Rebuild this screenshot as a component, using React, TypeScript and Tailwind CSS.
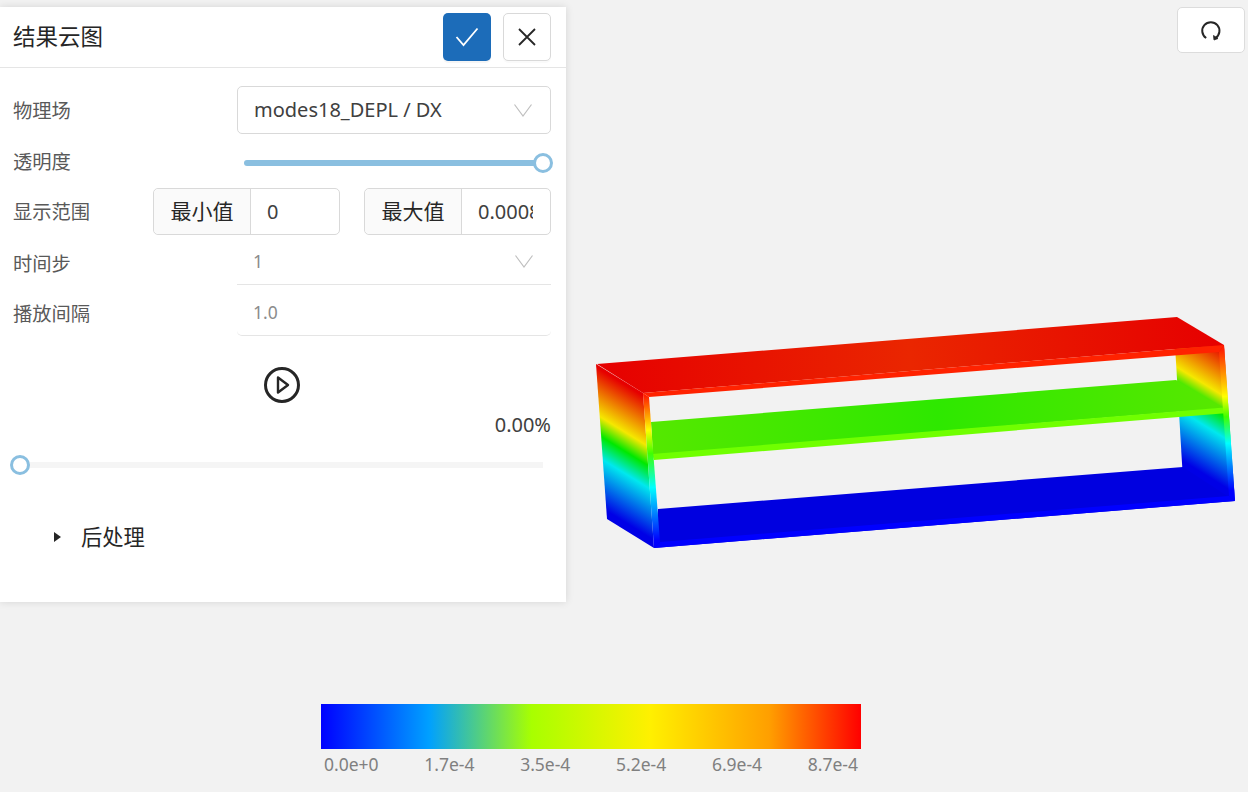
const labels = ['0.0e+0', '1.7e-4', '3.5e-4', '5.2e-4', '6.9e-4', '8.7e-4'];

function Field({ label, labelClass, children, className }: { label: string; labelClass: string; children: React.ReactNode; className: string }) {
  return (
    <div className={`flex items-center justify-between pl-[13px] pr-[15px] ${className}`}>
      <span className={`text-[19.300px] text-[#595959] ${labelClass}`}>{label}</span>
      {children}
    </div>
  );
}

function RangeInput({ addon, value, inputClass }: { addon: string; value: string; inputClass: string }) {
  return (
    <div className="flex h-[47px] rounded-[5px] border border-[#d9d9d9]">
      <div className="flex w-[97px] items-center justify-center rounded-l-[5px] border-r border-[#d9d9d9] bg-[#fafafa] pt-[1px] text-[21px] text-[#262626]">
        {addon}
      </div>
      <input readOnly value={value} className={`bg-transparent pt-[1px] text-[20px] text-[#404040] outline-none ${inputClass}`} />
    </div>
  );
}

function Chevron() {
  return (
    <svg width="18" height="13" viewBox="0 0 18 13" fill="none" stroke="#bfbfbf" strokeWidth="1.200">
      <polyline points="0.500,0.500 9,12 17.500,0.500" />
    </svg>
  );
}

function WallStops() {
  return (
    <>
      <stop offset="0.02" stopColor="#e60000" />
      <stop offset="0.34" stopColor="#f5e800" />
      <stop offset="0.47" stopColor="#00e800" />
      <stop offset="0.62" stopColor="#00e8ee" />
      <stop offset="0.95" stopColor="#0000e6" />
    </>
  );
}

function Model() {
  return (
    <svg viewBox="590 310 650 245" className="absolute left-[590px] top-[310px] h-[245px] w-[650px]">
      <defs>
        <linearGradient id="sideL" gradientUnits="userSpaceOnUse" x1="596" y1="364" x2="530" y2="471">
          <WallStops />
        </linearGradient>
        <linearGradient id="sideR" gradientUnits="userSpaceOnUse" x1="1177" y1="317" x2="1111" y2="424">
          <WallStops />
        </linearGradient>
        <linearGradient id="postL" gradientUnits="userSpaceOnUse" x1="646" y1="393" x2="657" y2="548">
          <stop offset="0.02" stopColor="#ff2000" />
          <stop offset="0.24" stopColor="#ffff00" />
          <stop offset="0.39" stopColor="#40ff00" />
          <stop offset="0.61" stopColor="#00ffff" />
          <stop offset="0.95" stopColor="#0000ff" />
        </linearGradient>
        <linearGradient id="postR" gradientUnits="userSpaceOnUse" x1="1222" y1="345" x2="1233" y2="501">
          <stop offset="0.03" stopColor="#ff2000" />
          <stop offset="0.33" stopColor="#ffff00" />
          <stop offset="0.46" stopColor="#40ff00" />
          <stop offset="0.63" stopColor="#00ffff" />
          <stop offset="0.93" stopColor="#0000ff" />
        </linearGradient>
        <linearGradient id="top" gradientUnits="userSpaceOnUse" x1="600" y1="380" x2="1220" y2="330">
          <stop offset="0" stopColor="#e60000" />
          <stop offset="0.5" stopColor="#ea2600" />
          <stop offset="1" stopColor="#e60000" />
        </linearGradient>
        <linearGradient id="shelf" gradientUnits="userSpaceOnUse" x1="650" y1="440" x2="1225" y2="395">
          <stop offset="0" stopColor="#55e800" />
          <stop offset="0.5" stopColor="#2ee800" />
          <stop offset="1" stopColor="#58e800" />
        </linearGradient>
      </defs>
      <polygon points="1175,345 1224,345 1235,501 1183,480" fill="url(#sideR)" />
      <polygon points="658,509 1183,467 1235,501 654,548" fill="#0000e0" />
      <polygon points="660,542 1229,496 1235,501 654,548" fill="#0000ff" />
      <polygon points="651,422 1176,380 1224,408 653,455" fill="url(#shelf)" />
      <polygon points="652,454 1224,407.500 1228,413 654,460" fill="#70ff00" />
      <polygon points="597,364 1177,317 1224,345 643,393" fill="url(#top)" />
      <polygon points="643,393 1224,345 1219,352 649,397" fill="#ff2200" />
      <polygon points="596,364 643,393 654,548 607,519" fill="url(#sideL)" />
      <polygon points="643,393 649,397 660,542 654,548" fill="url(#postL)" />
      <polygon points="1224,345 1219,352 1229,496 1235,501" fill="url(#postR)" />
    </svg>
  );
}

export default function App() {
  return (
    <div className="relative h-[792px] w-[1248px] overflow-hidden bg-[#f2f2f2] font-['Noto_Sans','Noto_Sans_CJK_SC',sans-serif]">
      <Model />

      <div className="absolute left-0 top-[7px] h-[595px] w-[566px] bg-white shadow-[0_0_8px_rgba(0,0,0,0.12)]">
        <div className="flex h-[61px] items-center justify-between border-b border-[#e5e5e5] pl-[13px] pr-[15px]">
          <span className="text-[22.500px] text-[#262626]">结果云图</span>
          <div className="flex gap-3">
            <button className="flex h-12 w-12 items-center justify-center rounded-[5px] bg-[#1c6cb9] shadow-[0_2px_0_rgba(0,0,0,0.04)]">
              <svg width="24" height="20" viewBox="0 0 24 20" fill="none" stroke="#fff" strokeWidth="1.800">
                <polyline points="1.500,10 8.500,18 22.500,1.500" />
              </svg>
            </button>
            <button className="flex h-12 w-12 items-center justify-center rounded-[5px] border border-[#d9d9d9] bg-white shadow-[0_2px_0_rgba(0,0,0,0.02)]">
              <svg width="18" height="18" viewBox="0 0 18 18" fill="none" stroke="#262626" strokeWidth="1.800">
                <path d="M1 1 L17 17 M17 1 L1 17" />
              </svg>
            </button>
          </div>
        </div>

        <Field label="物理场" labelClass="pt-[2px]" className="mt-[18px]">
          <div className="flex h-12 w-[314px] items-center justify-between rounded-[5px] border border-[#d9d9d9] pl-4 pr-[18px] text-[20px] text-[#404040]">
            modes18_DEPL / DX
            <Chevron />
          </div>
        </Field>

        <Field label="透明度" labelClass="pb-[2px]" className="mt-[5px] h-[49px]">
          <div className="relative mb-[2px] mr-[8px] h-[6px] w-[299px] rounded-full bg-[#8abfe0]">
            <div className="absolute right-[-10px] top-[-7px] h-5 w-5 rounded-full border-[3px] border-[#8abfe0] bg-white" />
          </div>
        </Field>

        <Field label="显示范围" labelClass="pt-[2px]" className="">
          <div className="flex gap-6">
            <RangeInput addon="最小值" value="0" inputClass="w-[88px] pl-[16px]" />
            <RangeInput addon="最大值" value="0.00088" inputClass="ml-[16px] mr-[17px] w-[55px]" />
          </div>
        </Field>

        <Field label="时间步" labelClass="pt-[6px]" className="mt-[3px] h-[47px]">
          <div className="flex h-[47px] w-[314px] items-center justify-between border-b border-[#e5e5e5] pb-[1px] pl-4 pr-[18px] pt-[1px] text-[17.500px] text-[#8c8c8c]">
            1
            <Chevron />
          </div>
        </Field>

        <Field label="播放间隔" labelClass="pt-[4px]" className="mt-[4px] h-[47px]">
          <div className="flex h-[47px] w-[314px] items-center rounded-b-[5px] border-b border-[#e5e5e5] pl-4 pt-[1px] text-[17.500px] text-[#8c8c8c]">
            1.0
          </div>
        </Field>

        <div className="mt-[31px] flex justify-center pr-[2px]">
          <svg width="36" height="36" viewBox="0 0 36 36" fill="none" stroke="#262626" strokeWidth="3">
            <circle cx="18" cy="18" r="16.500" />
            <path d="M14 10.500 L24 18 L14 25.500 Z" strokeWidth="2.400" strokeLinejoin="round" />
          </svg>
        </div>

        <div className="mt-[10px] pr-[15px] text-right text-[20px] leading-6 text-[#404040]">0.00%</div>

        <div className="relative ml-[20px] mt-[25px] h-[6px] w-[523px] bg-[#f5f5f5]">
          <div className="absolute left-[-10px] top-[-7px] h-5 w-5 rounded-full border-[3px] border-[#8abfe0] bg-white" />
        </div>

        <div className="ml-[54px] mt-[53px] flex items-center gap-5 text-[21.300px] text-[#262626]">
          <span className="h-0 w-0 border-y-[5.500px] border-l-[7px] border-y-transparent border-l-[#262626]" />
          后处理
        </div>
      </div>

      <button className="absolute left-[1177px] top-[7px] flex h-[46px] w-[68px] items-center justify-center rounded-[5px] border border-[#dcdcdc] bg-white pt-[1px]">
        <svg width="24" height="24" viewBox="0 0 24 24" fill="none" stroke="#262626" strokeWidth="2">
          <path d="M7.200 19 A8.600 8.600 0 1 1 16.500 19" />
          <path d="M14.500 16.500 L15 21 L19 19.500 Z" fill="#262626" strokeWidth="0.800" />
        </svg>
      </button>

      <div className="absolute left-[321px] top-[704px] w-[540px]">
        <div className="h-[45px] bg-[linear-gradient(90deg,#0000ff_0%,#00a0ff_20%,#a8ff00_39%,#fff000_61%,#ff9f00_83%,#ff0000_100%)]" />
        <div className="mt-[2px] flex justify-between px-[3px] text-[17.500px] text-[#808080]">
          {labels.map((label) => (
            <span key={label}>{label}</span>
          ))}
        </div>
      </div>
    </div>
  );
}
